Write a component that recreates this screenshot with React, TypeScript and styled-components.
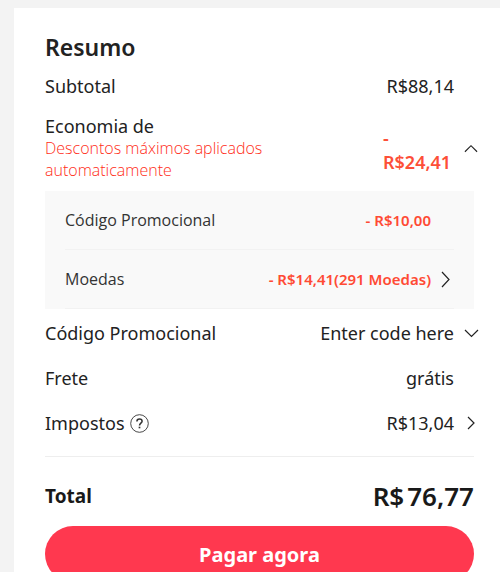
import React from "react";
import styled, { createGlobalStyle } from "styled-components";

const GlobalStyle = createGlobalStyle`
  * { box-sizing: border-box; }
  body {
    margin: 0;
    background: #f3f3f3;
    color: #222;
    font-family: "Noto Sans", "Open Sans", sans-serif;
  }
  button { font: inherit; color: inherit; border: 0; padding: 0; background: none; cursor: pointer; }
`;

const Page = styled.main`
  padding: 8px 0 0 14px;
`;

const Card = styled.section`
  background: #fff;
  padding: 24px 22px 24px 31px;
`;

const Title = styled.h1`
  margin: 0 0 12px;
  font-size: 23px;
  line-height: 30px;
  font-weight: 600;
`;

const Row = styled.div<{ $gap?: number }>`
  display: grid;
  grid-template-columns: 1fr auto 14px;
  column-gap: 10px;
  align-items: center;
  font-size: 18px;
  line-height: 24px;
  margin-bottom: ${(p) => p.$gap ?? 21}px;
`;

const Label = styled.span`
  display: flex;
  align-items: center;
  gap: 5px;
`;

const SavingsLabel = styled.div`
  line-height: 22px;
`;

const Note = styled.div`
  max-width: 260px;
  font-family: "Open Sans", sans-serif;
  font-size: 16px;
  font-weight: 300;
  color: #ff2d18;
`;

const Savings = styled.span`
  width: 71px;
  padding-top: 4px;
  color: #fd4f38;
  font-weight: 600;
`;

const IconButton = styled.button`
  display: flex;
  justify-content: center;
`;

const CodeButton = styled.button`
  display: contents;
`;

const Panel = styled.div`
  margin: 0 4px 12px 0;
  padding: 0 20px;
  background: #f9f9f9;
`;

const PanelRow = styled.div`
  display: grid;
  grid-template-columns: 1fr auto 10px;
  column-gap: 9px;
  padding-right: 4px;
  align-items: center;
  height: 59px;
  border-bottom: 1px solid #f2f2f2;
  font-family: "Open Sans", sans-serif;
  font-size: 16px;
  color: #333;
`;

const Discount = styled.span`
  color: #ff4a34;
  font-family: "Noto Sans", sans-serif;
  font-size: 15px;
  font-weight: 600;
`;

const Divider = styled.hr`
  margin: 0 4px 22px 0;
  border: 0;
  border-top: 1px solid #eee;
`;

const Total = styled.div`
  display: flex;
  justify-content: space-between;
  align-items: center;
  margin: 0 4px 13px 0;
  line-height: 34px;
  font-size: 19px;
  font-weight: 700;
  color: #191919;
`;

const TotalValue = styled.strong`
  display: flex;
  gap: 3px;
  font-size: 26px;
  font-weight: 600;
`;

const PayButton = styled.button`
  && {
    display: block;
    width: calc(100% - 4px);
    height: 56px;
    border-radius: 28px;
    background: #ff384f;
    color: #fff;
    font-size: 20px;
    font-weight: 700;
  }
`;

const chevrons = {
  up: { d: "M1 8 7.500 1.500 14 8", w: 15, h: 9 },
  down: { d: "M1 1 7.500 7.500 14 1", w: 15, h: 9 },
  right: { d: "M1 1 7 7 1 13", w: 8, h: 14 },
  large: { d: "M1 1 8 8.500 1 16", w: 9, h: 17 },
};

const Chevron = ({ kind }: { kind: keyof typeof chevrons }) => {
  const { d, w, h } = chevrons[kind];
  return (
    <svg width={w} height={h} viewBox={`0 0 ${w} ${h}`} fill="none" stroke="#222" strokeWidth="1.2" aria-hidden="true">
      <path d={d} />
    </svg>
  );
};

const HelpIcon = () => (
  <svg width="19" height="19" viewBox="0 0 19 19" fill="none" stroke="#333" aria-hidden="true">
    <circle cx="9.500" cy="9.500" r="8.800" strokeWidth="0.9" />
    <path d="M6.900 7.500c0-1.600 1-2.500 2.600-2.500s2.600.9 2.600 2.200c0 1.900-2.600 2-2.600 4.200" strokeWidth="1.500" />
    <path d="M9.500 12.700v1.600" strokeWidth="1.700" />
  </svg>
);

export default function App() {
  return (
    <>
      <GlobalStyle />
      <Page>
        <Card>
          <Title>Resumo</Title>
          <Row $gap={17}>
            <Label>Subtotal</Label>
            <span>R$88,14</span>
          </Row>
          <Row $gap={10}>
            <SavingsLabel>
              <div>Economia de</div>
              <Note>Descontos máximos aplicados automaticamente</Note>
            </SavingsLabel>
            <Savings>- R$24,41</Savings>
            <IconButton aria-label="Economia de">
              <Chevron kind="up" />
            </IconButton>
          </Row>
          <Panel>
            <PanelRow>
              <span>Código Promocional</span>
              <Discount>- R$10,00</Discount>
            </PanelRow>
            <PanelRow>
              <span>Moedas</span>
              <Discount>- R$14,41(291 Moedas)</Discount>
              <IconButton aria-label="Moedas">
                <Chevron kind="large" />
              </IconButton>
            </PanelRow>
          </Panel>
          <Row>
            <Label>Código Promocional</Label>
            <CodeButton>
              <span>Enter code here</span>
              <Chevron kind="down" />
            </CodeButton>
          </Row>
          <Row>
            <Label>Frete</Label>
            <span>grátis</span>
          </Row>
          <Row>
            <Label>
              Impostos
              <IconButton aria-label="Ajuda">
                <HelpIcon />
              </IconButton>
            </Label>
            <span>R$13,04</span>
            <IconButton aria-label="Impostos">
              <Chevron kind="right" />
            </IconButton>
          </Row>
          <Divider />
          <Total>
            <span>Total</span>
            <TotalValue>
              <span>R$</span>
              <span>76,77</span>
            </TotalValue>
          </Total>
          <PayButton>Pagar agora</PayButton>
        </Card>
      </Page>
    </>
  );
}
